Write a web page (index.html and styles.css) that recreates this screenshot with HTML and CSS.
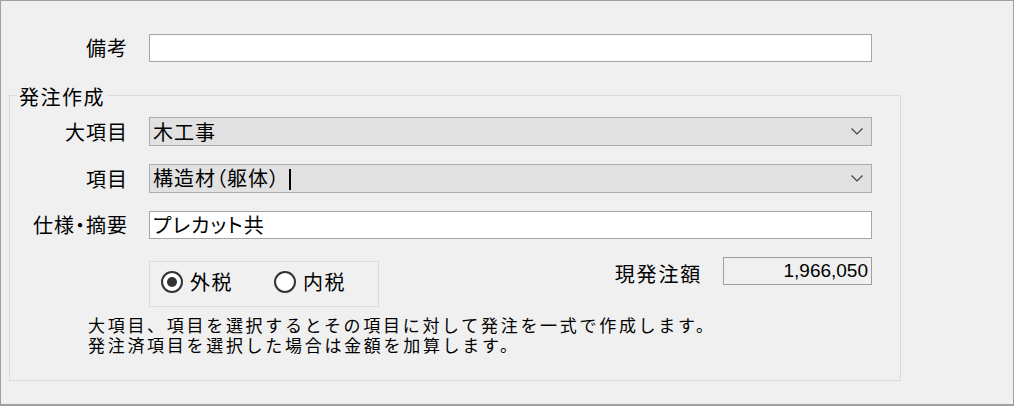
FILE: index.html
```html
<!DOCTYPE html>
<html lang="ja">
<head>
<meta charset="utf-8">
<title>発注作成</title>
<link rel="stylesheet" href="styles.css">
</head>
<body>
<div class="frame">
  <div class="row row-top">
    <label class="lbl">備考</label>
    <div class="input"></div>
  </div>

  <div class="group">
    <div class="legend">発注作成</div>

    <div class="row row-first">
      <label class="lbl">大項目</label>
      <div class="combo">
        <span class="val">木工事</span>
        <svg class="chev" width="12" height="7" viewBox="0 0 12 7"><polyline points="0.5,0.5 6,6 11.5,0.5" fill="none" stroke="#3c3c3c" stroke-width="1.1"/></svg>
      </div>
    </div>

    <div class="row row-next">
      <label class="lbl">項目</label>
      <div class="combo">
        <span class="val">構造材（躯体）<i class="caret"></i></span>
        <svg class="chev" width="12" height="7" viewBox="0 0 12 7"><polyline points="0.5,0.5 6,6 11.5,0.5" fill="none" stroke="#3c3c3c" stroke-width="1.1"/></svg>
      </div>
    </div>

    <div class="row row-next row-input">
      <label class="lbl">仕様・摘要</label>
      <div class="input"><span class="val">プレカット共</span></div>
    </div>

    <div class="row row-opts">
      <span></span>
      <div class="opts">
        <div class="radios">
          <span class="radio checked"><i class="dot"></i></span><span class="rlabel">外税</span>
          <span class="radio second"></span><span class="rlabel">内税</span>
        </div>
        <div class="amount">
          <span class="amount-label">現発注額</span>
          <div class="amount-box">1,966,050</div>
        </div>
      </div>
    </div>

    <div class="note">
      <div class="note-line">大項目、項目を選択するとその項目に対して発注を一式で作成します。</div>
      <div class="note-line">発注済項目を選択した場合は金額を加算します。</div>
    </div>
  </div>
</div>
</body>
</html>
```

FILE: styles.css
```css
html, body {
  margin: 0;
  padding: 0;
  background: #f0f0f0;
}

.frame {
  box-sizing: border-box;
  width: 1014px;
  height: 406px;
  border: 1px solid #a0a0a0;
  border-bottom-width: 2px;
  background: #f0f0f0;
  padding-top: 33px;
  font-family: "Noto Sans CJK JP", sans-serif;
  color: #000;
}

.row {
  display: grid;
  grid-template-columns: 118px 723px;
  column-gap: 21px;
  align-items: center;
}

.row-top {
  grid-template-columns: 127px 723px;
}

.lbl {
  text-align: right;
  font-size: 20px;
  line-height: 22px;
  letter-spacing: 1px;
  font-feature-settings: "palt";
}

.input {
  box-sizing: border-box;
  height: 28px;
  background: #fff;
  border: 1px solid #a5a5a5;
  display: flex;
  align-items: center;
  padding-left: 3px;
}

.combo {
  box-sizing: border-box;
  height: 29px;
  background: #e1e1e1;
  border: 1px solid #adadad;
  display: flex;
  align-items: center;
  padding-left: 3px;
  padding-right: 8px;
}

.val {
  flex: 1;
  font-size: 20px;
  line-height: 22px;
  letter-spacing: 1px;
  font-feature-settings: "palt";
  white-space: nowrap;
}

.caret {
  display: inline-block;
  width: 2px;
  height: 21px;
  background: #000;
  margin-left: 9px;
  vertical-align: -4px;
}

.chev {
  display: block;
  flex: none;
}

.group {
  box-sizing: border-box;
  margin-top: 33px;
  margin-left: 8px;
  width: 892px;
  height: 286px;
  border: 1px solid #dadada;
}

.legend {
  width: fit-content;
  margin-top: -10px;
  margin-left: 7px;
  padding: 0 2px;
  background: #f0f0f0;
  font-size: 20px;
  line-height: 22px;
  letter-spacing: 1.5px;
}

.row-first {
  margin-top: 9px;
}

.row-next {
  margin-top: 18px;
}

.row-opts {
  margin-top: 18px;
  align-items: start;
}

.opts {
  display: flex;
  align-items: flex-start;
  justify-content: space-between;
}

.radios {
  box-sizing: border-box;
  margin-top: 4px;
  width: 230px;
  height: 46px;
  border: 1px solid #dcdcdc;
  display: flex;
  align-items: center;
  padding-left: 11px;
  padding-bottom: 4px;
}

.radio {
  box-sizing: border-box;
  width: 22px;
  height: 22px;
  border: 2px solid #333;
  border-radius: 50%;
  background: #fff;
  display: flex;
  align-items: center;
  justify-content: center;
  flex: none;
}

.radio .dot {
  width: 10px;
  height: 10px;
  border-radius: 50%;
  background: #333;
}

.radio.second {
  margin-left: 41px;
}

.rlabel {
  margin-left: 7px;
  font-size: 20px;
  line-height: 22px;
  letter-spacing: 1.5px;
}

.amount {
  display: flex;
  align-items: flex-start;
}

.amount-label {
  margin-top: 6px;
  margin-right: 21px;
  font-size: 20px;
  line-height: 22px;
  letter-spacing: 1.8px;
}

.amount-box {
  box-sizing: border-box;
  width: 149px;
  height: 28px;
  border: 1px solid #a0a0a0;
  background: #f0f0f0;
  text-align: right;
  padding-right: 3px;
  font-family: "Liberation Sans", Arial, sans-serif;
  font-size: 19px;
  line-height: 26px;
}

.note {
  margin: 8px 0 0 78px;
}

.note-line {
  height: 20px;
  font-size: 17px;
  line-height: 20px;
  letter-spacing: 2.7px;
  white-space: nowrap;
}
```
